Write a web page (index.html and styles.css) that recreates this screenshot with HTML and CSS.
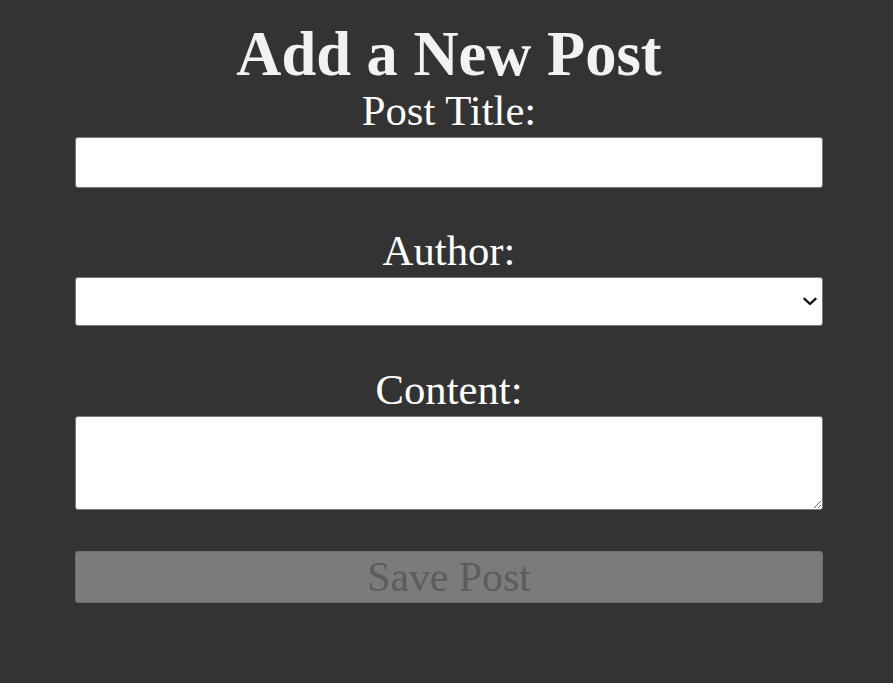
FILE: index.html
```html
<!DOCTYPE html>
<html>
<head>
<meta charset="utf-8">
<link rel="stylesheet" href="styles.css">
</head>
<body>
<main class="page">
  <h1 class="title">Add a New Post</h1>
  <form class="post-form">
    <label class="label" for="t">Post Title:</label>
    <input class="field field-input" id="t" type="text">
    <label class="label" for="a">Author:</label>
    <div class="select-wrap">
      <select class="field field-select" id="a"><option></option></select>
      <svg class="chevron" width="14" height="9" viewBox="0 0 14 9" aria-hidden="true">
        <path d="M1.5 1.8 L7 7 L12.5 1.8" fill="none" stroke="#111" stroke-width="2.4" stroke-linecap="round" stroke-linejoin="round"/>
      </svg>
    </div>
    <label class="label" for="c">Content:</label>
    <textarea class="field field-area" id="c"></textarea>
    <button class="save" type="button" disabled>Save Post</button>
  </form>
</main>
</body>
</html>
```
FILE: styles.css
```css
html, body {
  margin: 0;
  padding: 0;
  background: #333333;
}
body {
  font-family: "Liberation Serif", "DejaVu Serif", serif;
  color: #f4f4f4;
}
.page {
  width: 748px;
  margin: 0 0 0 75px;
  padding-top: 22px;
}
.title {
  margin: 0 0 5px;
  text-align: center;
  font-size: 62.5px;
  line-height: 64px;
  font-weight: bold;
  color: #f2f2f2;
}
.post-form {
  display: flex;
  flex-direction: column;
}
.label {
  text-align: center;
  font-size: 42.7px;
  line-height: 40px;
  padding-bottom: 6px;
  color: #ffffff;
}
.field {
  box-sizing: border-box;
  width: 748px;
  background: #ffffff;
  border: 1px solid #7a7a7a;
  border-radius: 3px;
  margin: 0;
}
.field-input {
  height: 51px;
  margin-bottom: 43px;
}
.select-wrap {
  position: relative;
  margin-bottom: 44px;
}
.field-select {
  display: block;
  height: 49px;
  appearance: none;
  -webkit-appearance: none;
}
.chevron {
  position: absolute;
  right: 6px;
  top: 20px;
  pointer-events: none;
}
.field-area {
  display: block;
  height: 94px;
  resize: vertical;
  margin-bottom: 41px;
}
.save {
  height: 52px;
  background: #7b7b7b;
  border: 1px solid #6e6e6e;
  border-radius: 3px;
  font-family: "Liberation Serif", "DejaVu Serif", serif;
  font-size: 41.8px;
  line-height: 50px;
  color: #5c5c5c;
  padding: 0;
}
```
